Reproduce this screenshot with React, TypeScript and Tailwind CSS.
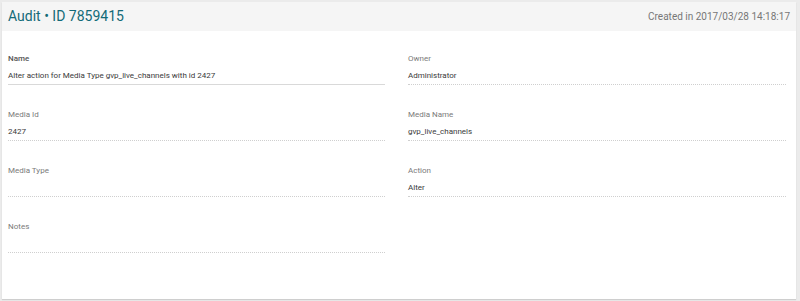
import React from "react";

type Field = { label: string; value: string; strong?: boolean };

function FieldView({ f }: { f: Field }) {
  return (
    <div className="flex flex-col">
      <div
        className={
          f.strong
            ? "h-[11px] leading-[11px] text-[8px] font-medium text-[#555]"
            : "h-[11px] leading-[11px] text-[8px] text-[#7a7a7a]"
        }
      >
        {f.label}
      </div>
      <div
        className={
          f.strong
            ? "mt-[6px] h-[15px] leading-[11px] text-[8px] text-[#3a3a3a] pb-[3px] border-b border-solid border-[#d9d9d9]"
            : "mt-[6px] h-[15px] leading-[11px] text-[8px] text-[#3a3a3a] pb-[3px] border-b border-dotted border-[#cfcfcf]"
        }
      >
        {f.value}
      </div>
    </div>
  );
}

export default function App() {
  const left: Field[] = [
    { label: "Name", value: "Alter action for Media Type gvp_live_channels with id 2427", strong: true },
    { label: "Media Id", value: "2427" },
    { label: "Media Type", value: "" },
    { label: "Notes", value: "" },
  ];
  const right: Field[] = [
    { label: "Owner", value: "Administrator" },
    { label: "Media Name", value: "gvp_live_channels" },
    { label: "Action", value: "Alter" },
  ];
  return (
    <div
      className="w-[800px] h-[301px] bg-[#ebebeb] pt-[2px] pl-[2px] pr-[4px] pb-[2px]"
      style={{ fontFamily: "Roboto, 'Liberation Sans', sans-serif" }}
    >
      <div className="h-full bg-white flex flex-col shadow-[0_1px_1px_rgba(0,0,0,0.12)]">
        <div className="h-[29px] shrink-0 bg-[#f5f5f5] flex items-center justify-between pl-[6px] pr-[6px]">
          <div className="text-[14px] text-[#136a78] tracking-[0px]">Audit • ID 7859415</div>
          <div className="text-[10px] text-[#777]">Created in 2017/03/28 14:18:17</div>
        </div>
        <div className="flex pl-[6px] pr-[10px] pt-[22px] gap-[23px]">
          <div className="w-[377px] flex flex-col gap-[24px]">
            {left.map((f) => (
              <FieldView key={f.label} f={f} />
            ))}
          </div>
          <div className="w-[378px] flex flex-col gap-[24px]">
            {right.map((f) => (
              <FieldView key={f.label} f={f} />
            ))}
          </div>
        </div>
      </div>
    </div>
  );
}
